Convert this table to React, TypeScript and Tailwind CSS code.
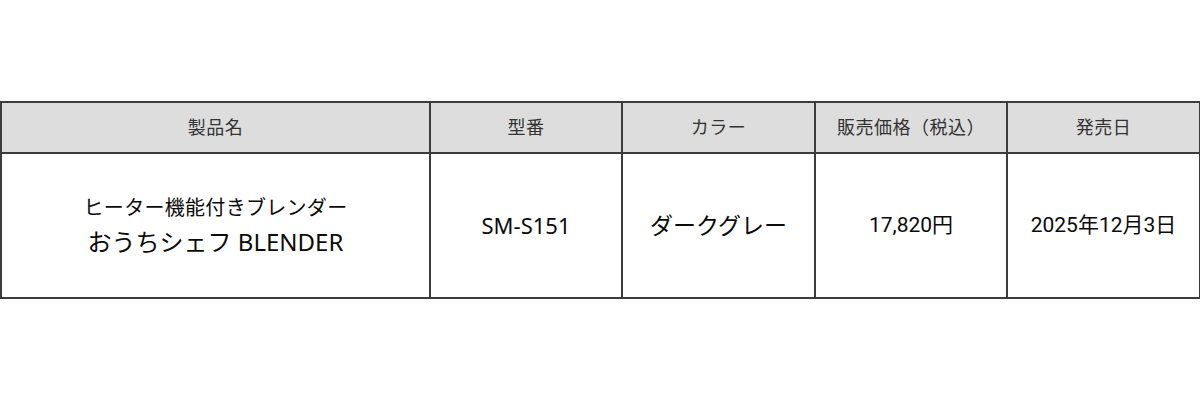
import React from 'react';

const headers = ['製品名', '型番', 'カラー', '販売価格（税込）', '発売日'];

const App: React.FC = () => {
  return (
    <div
      className="w-[1200px] h-[400px] bg-white pt-[101px]"
      style={{ fontFamily: '"Noto Sans", "Noto Sans CJK JP", sans-serif' }}
    >
      <table className="w-[1199px] table-fixed border-collapse text-center">
        <colgroup>
          <col className="w-[429px]" />
          <col className="w-[192px]" />
          <col className="w-[193px]" />
          <col className="w-[192px]" />
          <col className="w-[193px]" />
        </colgroup>
        <thead>
          <tr className="h-[51px] bg-[#dddddd]">
            {headers.map((h) => (
              <th
                key={h}
                className="border-2 border-[#3c3c3c] font-normal text-[18px] text-[#333333] tracking-[0.5px]"
              >
                {h}
              </th>
            ))}
          </tr>
        </thead>
        <tbody>
          <tr className="h-[145px] text-[#0a0a0a]">
            <td className="border-2 border-[#3c3c3c]">
              <div className="flex flex-col items-center gap-[5px]">
                <span className="text-[20px] leading-[27px] tracking-[0.3px]">ヒーター機能付きブレンダー</span>
                <span className="text-[24px] leading-[31px]">おうちシェフ BLENDER</span>
              </div>
            </td>
            <td className="border-2 border-[#3c3c3c] text-[22px]">SM-S151</td>
            <td className="border-2 border-[#3c3c3c] text-[23px]">ダークグレー</td>
            <td className="border-2 border-[#3c3c3c] text-[21px]">
              <span style={{ fontFamily: 'Roboto, "Noto Sans CJK JP", sans-serif' }}>17,820円</span>
            </td>
            <td className="border-2 border-[#3c3c3c] text-[21px]">
              <span style={{ fontFamily: 'Roboto, "Noto Sans CJK JP", sans-serif' }}>2025年12月3日</span>
            </td>
          </tr>
        </tbody>
      </table>
    </div>
  );
};

export default App;
